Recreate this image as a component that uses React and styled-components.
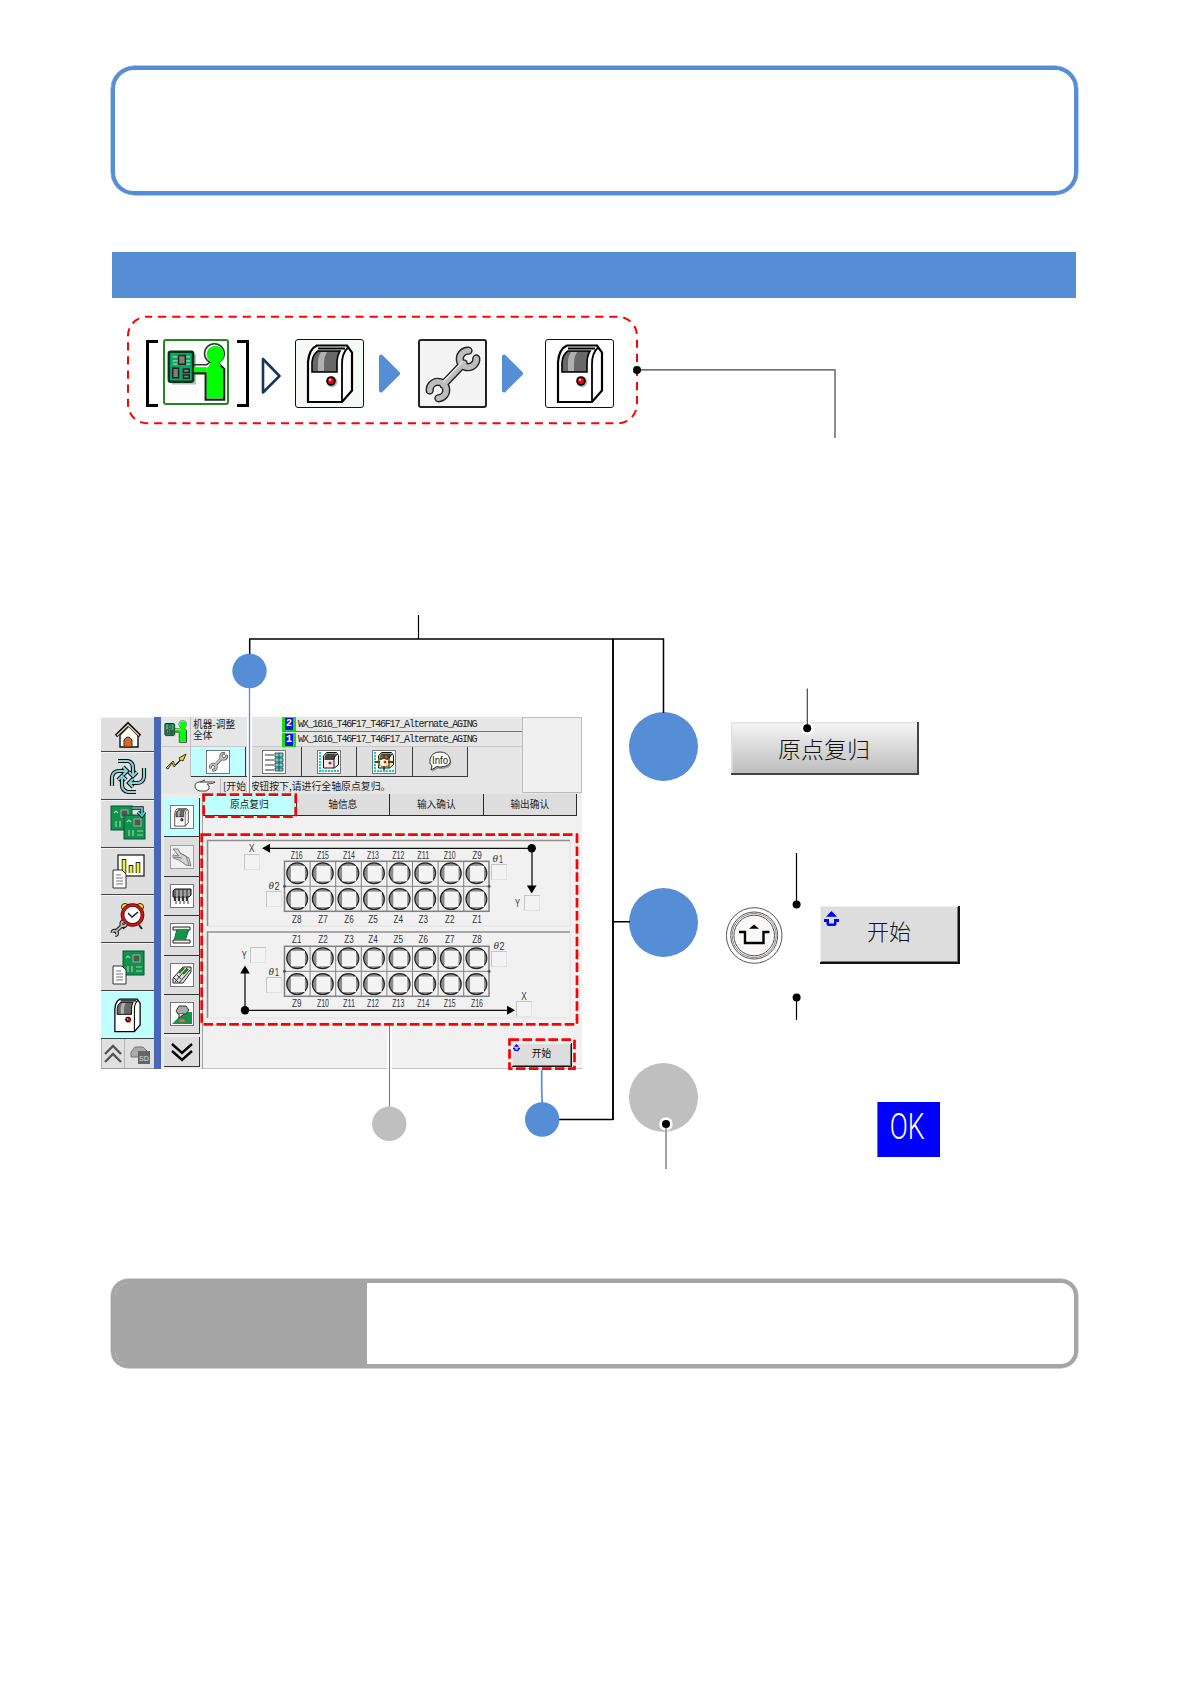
import React, { Fragment } from "react";
import styled, { createGlobalStyle } from "styled-components";

const BLUE = "#558ed5";
const CJK = '"Noto Sans CJK SC", sans-serif';

const GlobalStyle = createGlobalStyle`
    * {
        box-sizing: border-box;
    }
    body {
        margin: 0;
        background-color: white;
    }
    svg {
        display: block;
        flex: none;
    }
`;

const Page = styled.div`
    position: relative;
    width: 1190px;
    height: 1684px;
    padding-top: 66px;
    overflow: hidden;
    background-color: white;
`;

const IntroBox = styled.div`
    width: 967px;
    height: 129px;
    margin-left: 111px;
    border: 4px solid ${BLUE};
    box-shadow: 0 0 0 0.4px ${BLUE};
    border-radius: 23px;
`;

const Band = styled.div`
    width: 964px;
    height: 46px;
    margin: 57px 0 0 112px;
    background-color: ${BLUE};
`;

const Path = styled.div`
    position: relative;
    width: 512px;
    height: 110px;
    margin: 17px 0 0 126px;
    padding: 24px 0 0 20px;
    display: flex;
    align-items: flex-start;
`;

const PathFrame = styled.svg`
    position: absolute;
    left: 0;
    top: 0;
`;

const Bracket = styled.div`
    width: 12px;
    height: 67px;
    margin: 1px 0 0 ${p => p.$gap || 0}px;
    border: 3px solid black;
    border-${p => (p.$side === "left" ? "right" : "left")}: none;
`;

const PathIcon = styled.div`
    flex: none;
    width: ${p => p.$size || 69}px;
    height: ${p => p.$size || 69}px;
    margin-left: ${p => p.$gap}px;
    border: ${p => p.$border || "1.5px solid #111"};
    border-radius: 3px;
    background-color: ${p => p.$fill || "#f6faf6"};
    display: flex;
    align-items: center;
    justify-content: center;
`;

const PathArrow = styled.svg`
    margin: ${p => p.$top}px 0 0 ${p => p.$gap}px;
`;

const Figure = styled.div`
    display: flex;
    align-items: flex-start;
    margin: 286px 0 0 101px;
`;

const Screen = styled.div`
    display: flex;
    width: 481px;
    height: 352px;
    margin-top: 6px;
    background-color: #f1f1f1;
    font-family: ${CJK};
    font-size: 9.7px;
    line-height: 11px;
    color: #222;
`;

const MainMenu = styled.div`
    width: 53px;
    display: flex;
    flex-direction: column;
    background-color: #e0e0e0;
`;

const MenuCell = styled.div`
    height: ${p => p.$height}px;
    display: flex;
    align-items: center;
    justify-content: center;
    background-color: ${p => (p.$active ? "#bfffff" : "#dfdfdf")};
    border-bottom: 1px solid #444;
    border-top: 1px solid #f4f4f4;
`;

const MenuFoot = styled.div`
    display: flex;
    flex: 1;
    border-bottom: 1px solid #999;
    > div {
        display: flex;
        align-items: center;
        justify-content: center;
        border-left: 1px solid #b4b4b4;
    }
    > div:first-child {
        width: 23px;
    }
    > div:last-child {
        width: 30px;
    }
`;

const Divider = styled.div`
    width: 7px;
    background-color: #4767bd;
`;

const Workspace = styled.div`
    width: 421px;
    display: flex;
    flex-direction: column;
`;

const Top = styled.div`
    display: flex;
    height: 77px;
    background-color: #e6e6e6;
`;

const TopRows = styled.div`
    width: 361px;
    display: flex;
    flex-direction: column;
`;

const Preview = styled.div`
    width: 60px;
    height: 76px;
    background-color: #f0f0f0;
    border: 1px solid #bcbcbc;
`;

const TitleRow = styled.div`
    display: flex;
    height: 30px;
    border-bottom: 1px solid #c8c8c8;
`;

const CornerIcon = styled.div`
    width: 30px;
    display: flex;
    align-items: center;
    justify-content: center;
    border-right: 1px solid #c0c0c0;
`;

const ScreenTitle = styled.div`
    width: 91px;
    padding: 2px 0 0 2px;
    white-space: nowrap;
`;

const Programs = styled.div`
    flex: 1;
`;

const Program = styled.div`
    display: flex;
    align-items: center;
    height: 15px;
    border-bottom: 1px solid #777;
    font-family: "Liberation Mono", monospace;
    font-size: 10px;
    letter-spacing: -1.18px;
    white-space: nowrap;
    &:last-child {
        border-bottom: none;
    }
`;

const LaneNumber = styled.div`
    width: 14px;
    height: 14px;
    margin-right: 2px;
    border: solid #12e012;
    border-width: 1px 3px 1px 3px;
    background-color: #1010e8;
    color: white;
    font-weight: bold;
    letter-spacing: 0;
    line-height: 12px;
    text-align: center;
`;

const ToolRow = styled.div`
    display: flex;
    height: 30px;
`;

const Tool = styled.div`
    width: 55.4px;
    display: flex;
    align-items: center;
    justify-content: center;
    background-color: ${p => (p.$active ? "#bfffff" : "#dfdfdf")};
    border: solid #3a3a3a;
    border-width: 0 1px 1.5px 0;
`;

const MessageRow = styled.div`
    display: flex;
    height: 17px;
    align-items: center;
    padding-left: 33px;
    white-space: nowrap;
    > span {
        margin-left: 4px;
        padding-left: 2px;
        border-left: 1px solid #bbb;
        font-size: 9.9px;
        line-height: 16px;
    }
`;

const Body = styled.div`
    display: flex;
    flex: 1;
`;

const SideMenu = styled.div`
    width: 42px;
    padding: 4px 3px 0;
    border-right: 1px solid #a0a0a0;
    background-color: #ececec;
`;

const SideCell = styled.div`
    width: 36px;
    height: ${p => p.$height || 39.4}px;
    margin-top: ${p => p.$gap || 0}px;
    display: flex;
    align-items: center;
    justify-content: center;
    background-color: ${p => (p.$active ? "#bfffff" : "#dedede")};
    border: solid #333;
    border-width: 0 1.5px 1.5px 0;
`;

const IconFrame = styled.div`
    width: 24px;
    height: 24px;
    border: 1px solid #777;
    background-color: #fff;
    opacity: ${p => (p.$dim ? 0.6 : 1)};
    display: flex;
    align-items: center;
    justify-content: center;
`;

const Content = styled.div`
    width: 379px;
    display: flex;
    flex-direction: column;
    border-bottom: 1px solid #c4c4c4;
`;

const Tabs = styled.div`
    display: flex;
    height: 22px;
    width: 374px;
`;

const Tab = styled.div`
    flex: 1;
    display: flex;
    align-items: center;
    justify-content: center;
    background-color: ${p => (p.$active ? "#bfffff" : "#dddddd")};
    border: solid #2a2a2a;
    border-width: 0 1.5px 1.5px 0;
`;

const Panels = styled.svg`
    margin-top: 19px;
`;

const PanelFoot = styled.div`
    display: flex;
    justify-content: flex-end;
    margin-top: 15px;
    padding-right: 10px;
`;

const StartButton = styled.div`
    position: relative;
    display: flex;
    align-items: center;
    justify-content: center;
    width: ${p => (p.$large ? 140 : 60)}px;
    height: ${p => (p.$large ? 58 : 24)}px;
    margin-left: ${p => p.$gap || 0}px;
    padding-bottom: ${p => (p.$large ? 8 : 3)}px;
    background-color: #dddddd;
    border: solid #111;
    border-width: 0 ${p => (p.$large ? 2 : 1)}px ${p => (p.$large ? 2 : 1)}px 0;
    box-shadow: inset 1px 1px 0 #efefef, inset -1px -1px 0 #777;
    font-family: ${CJK};
    font-size: ${p => (p.$large ? 22 : 9.7)}px;
    font-weight: ${p => (p.$large ? 300 : 400)};
    color: #111;
`;

const StartMark = styled.svg`
    position: absolute;
    left: ${p => p.$left}px;
    top: ${p => p.$top}px;
`;

const Steps = styled.div`
    margin: 1px 0 0 47px;
`;

const Step = styled.div`
    display: flex;
    height: 175.5px;
`;

const StepCircle = styled.div`
    width: 69px;
    height: 69px;
    border-radius: 50%;
    background-color: ${p => (p.$muted ? "#bfbfbf" : BLUE)};
`;

const OriginButton = styled.div`
    width: 188px;
    height: 53px;
    margin: 10px 0 0 33px;
    display: flex;
    align-items: center;
    justify-content: center;
    background: linear-gradient(#f6f6f6, #bdbdbd);
    border: solid #444;
    border-width: 0 2px 2px 0;
    box-shadow: inset 1.5px 1.5px 0 #e2e2e2;
    font-family: ${CJK};
    font-size: 23px;
    font-weight: 300;
    color: #111;
`;

const KeyRow = styled.div`
    display: flex;
    align-items: flex-start;
    margin: 18px 0 0 28px;
`;

const OkBadge = styled.div`
    width: 63px;
    height: 55px;
    margin: 39px 0 0 178.5px;
    display: flex;
    align-items: center;
    justify-content: center;
    background-color: #0000ff;
    border-left: 1px solid #777;
`;

const OkText = styled.span`
    font-family: Roboto, sans-serif;
    font-size: 37px;
    font-weight: 300;
    line-height: 37px;
    color: white;
    transform: translate(-1px, -3px) scaleX(0.72);
`;

const NoteBox = styled.div`
    width: 967px;
    height: 89px;
    margin: 40px 0 0 111px;
    display: flex;
    overflow: hidden;
    border: 4px solid #a5a5a5;
    border-radius: 17px;
    box-shadow: 0 0 0 0.4px #a5a5a5;
`;

const NoteLabel = styled.div`
    width: 252px;
    background-color: #a5a5a5;
`;

const Callouts = styled.svg`
    position: absolute;
    left: 0;
    top: 0;
    pointer-events: none;
`;

function OperatorIcon({ size }) {
    return (
        <svg width={size} height={size} viewBox="0 0 66 66">
            <path d="M8 45h24V15" fill="none" stroke="#bbb" strokeWidth="2" />
            <rect x="5" y="12" width="25" height="31" rx="2" fill="#0ba862" stroke="#03341c" strokeWidth="2.6" />
            <path d="M9 17.500h18M9 21.500h18M9 25h18" stroke="#9fd8b8" strokeWidth="1.3" />
            <path d="M15 16h7v9h-7zM9 29h6v10h-6zM20 30h6v3.500h-6zM20 36h6v3.500h-6z" fill="#808080" stroke="#222" strokeWidth="1.6" />
            <path d="M31 28h13v6H31z" fill="#0f0" />
            <path d="M31 25.500h13l6-5" fill="none" stroke="#333" strokeWidth="1.6" />
            <path d="M31 34.500h12v27h19V30l-7-7" fill="none" stroke="#222" strokeWidth="2.4" />
            <path d="M44 60V29l8-7 9 8v30z" fill="#0f0" />
            <circle cx="52" cy="14" r="10.200" fill="#fff" stroke="#333" strokeWidth="1.6" />
            <circle cx="53" cy="15" r="9" fill="#0f0" />
            <path d="M48 23h8l3 4H46z" fill="#0f0" />
        </svg>
    );
}

function MachineIcon({ size }) {
    return (
        <svg width={size} height={size} viewBox="0 0 68 68">
            <path d="M12 62V22Q13 9 21 5.500h30l5 7v38L46 62z" fill="#fff" stroke="#000" strokeWidth="2.2" />
            <path d="M46 62V24Q46 13 52 7.500M22 8.500h27" fill="none" stroke="#000" strokeWidth="1.8" />
            <path d="M16 32V22Q17 14 22 11h22q-3 5-3 12v9z" fill="#686868" stroke="#000" strokeWidth="1.6" />
            <path d="M22 31V20q1-5 3-8h6q-3 5-3 10v9z" fill="#b0b0b0" />
            <circle cx="36" cy="42" r="5.400" fill="#bbb" />
            <circle cx="35" cy="41" r="3.900" fill="#f00" stroke="#000" strokeWidth="1.8" />
            <circle cx="34" cy="39.800" r="1.200" fill="#fbb" />
        </svg>
    );
}

function WrenchIcon({ size }) {
    const jaws = "M50 10A8.5 8.5 0 1 0 58 18M19 59A8.5 8.5 0 1 0 10 51M24 45L45 23";
    return (
        <svg width={size} height={size} viewBox="0 0 68 68" fill="none">
            <path d={jaws} stroke="#222" strokeWidth="8.5" strokeLinecap="round" />
            <path d={jaws} stroke="#bdbdbd" strokeWidth="5.6" strokeLinecap="round" />
            <path d="M24 42L44 21" stroke="#eee" strokeWidth="1.4" />
        </svg>
    );
}

function HomeIcon() {
    return (
        <svg width="30" height="28" viewBox="0 0 30 28">
            <path d="M7 14v12h18V14l-9-9z" fill="#fff" stroke="#111" strokeWidth="1.4" />
            <path d="M3 15L15 3l12 12" fill="none" stroke="#111" strokeWidth="3.4" />
            <path d="M4 14.500L15 4l11 10.500" fill="none" stroke="#f6c9a0" strokeWidth="1.4" />
            <path d="M11 26v-7q4-6 8 0v7z" fill="#d06a28" stroke="#421" />
        </svg>
    );
}

function CycleIcon() {
    const d = "M9 4h10q5 1 5 7v6M20 15l4 4 4-4M35 11v9q-1 6-7 6h-8M24 22l-4 4 4 4M27 35H19q-6-1-6-7v-7M17 23l-4-4-4 4M3 29v-9q1-6 7-6h8M14 10l4 4-4 4";
    return (
        <svg width="38" height="38" viewBox="0 0 38 38" fill="none">
            <path d={d} stroke="#111" strokeWidth="4.200" />
            <path d={d} stroke="#84d4d8" strokeWidth="2" />
        </svg>
    );
}

function Board({ x, y }) {
    return (
        <g transform={`translate(${x} ${y})`}>
            <rect width="21" height="24" fill="#10924a" stroke="#053" />
            <rect x="10" y="4" width="7" height="7" fill="#555" stroke="#ccc" strokeWidth=".7" />
            <path d="M3 7l2-2 2 2M5 15v6M9 15v6M13 16h6M13 20h6" stroke="#a5cfae" strokeWidth="1.2" fill="none" />
        </g>
    );
}

function Sheet({ x, y }) {
    return (
        <g transform={`translate(${x} ${y})`}>
            <path d="M0 0h9l4 4v14H0z" fill="#fff" stroke="#333" />
            <path d="M3 5h5M3 8h7M3 11h7M3 14h7" stroke="#777" />
        </g>
    );
}

function BoardsIcon() {
    return (
        <svg width="37" height="40" viewBox="0 0 37 40">
            <Board x={2} y={2} />
            <Board x={15} y={11} />
            <path d="M23 4h10v6M29 8l4 4 3-4" fill="none" stroke="#111" strokeWidth="3.400" />
            <path d="M23 4h10v6M29 8l4 4 3-4" fill="none" stroke="#5fd8e0" strokeWidth="1.600" />
        </svg>
    );
}

function ReportIcon() {
    return (
        <svg width="36" height="36" viewBox="0 0 36 36">
            <rect x="8" y="2" width="26" height="21" fill="#fff" stroke="#333" strokeWidth="1.400" />
            <path d="M14 6v14M21 12v8M28 9v11" stroke="#222" strokeWidth="4.600" />
            <path d="M14 7v13M21 13v7M28 10v10" stroke="#ee2" strokeWidth="2.800" />
            <Sheet x={3} y={17} />
        </svg>
    );
}

function ClockIcon() {
    const wrench = "M50 9A8.5 8.5 0 1 0 59 18M19 60A8.5 8.5 0 1 0 9 51M23 45L46 23";
    return (
        <svg width="36" height="36" viewBox="0 0 36 36">
            <circle cx="15" cy="6" r="3.500" fill="#fe2" stroke="#222" />
            <circle cx="30" cy="6" r="3.500" fill="#fe2" stroke="#222" />
            <path d="M16 24l-3 4M29 24l3 4" stroke="#222" strokeWidth="2" />
            <circle cx="22.500" cy="14" r="10" fill="#fff" stroke="#300" strokeWidth="3.600" />
            <circle cx="22.500" cy="14" r="10" fill="none" stroke="#d11" strokeWidth="2.200" />
            <path d="M18 12l4 4 6-5" fill="none" stroke="#111" strokeWidth="1.300" />
            <g transform="translate(0 18) scale(.27)">
                <path d={wrench} fill="none" stroke="#111" strokeWidth="14" />
                <path d={wrench} fill="none" stroke="#bbb" strokeWidth="7" />
            </g>
        </svg>
    );
}

function BoardSheetIcon() {
    return (
        <svg width="36" height="36" viewBox="0 0 36 36">
            <Board x={13} y={2} />
            <Sheet x={3} y={17} />
        </svg>
    );
}

function ChevronsIcon({ up }) {
    const d = up ? "M2 11l8-8 8 8M2 19l8-8 8 8" : "M2 2l10 9 10-9M2 9l10 9 10-9";
    return (
        <svg width={up ? 20 : 24} height={up ? 21 : 20}>
            <path d={d} fill="none" stroke={up ? "#555" : "#000"} strokeWidth="2.400" />
        </svg>
    );
}

function SdIcon() {
    return (
        <svg width="22" height="22" viewBox="0 0 22 22">
            <path d="M2 9l4-5h8l4 4v6H2z" fill="#aaa" stroke="#777" />
            <path d="M9 8h12v13H9z" fill="#666" />
            <text x="10" y="18" fontSize="8" textLength="10" lengthAdjust="spacingAndGlyphs" fontFamily="Liberation Sans, sans-serif" fill="#ddd">SD</text>
        </svg>
    );
}

function BoltIcon() {
    return (
        <svg width="22" height="18" viewBox="0 0 22 18">
            <path d="M1 15l7-7 2 4 5-5-1-2 7-4-3 7-2-1-7 7-2-4-4 6z" fill="#e8e010" stroke="#333" />
        </svg>
    );
}

function HandIcon() {
    return (
        <svg width="22" height="13" viewBox="0 0 22 13">
            <path d="M21 3H6Q1 3 1 7t5 5h6l3-2M21 3q-1 2-8 2M13 5q3 1 2 5M6 3l5-2" fill="#fff" stroke="#444" />
        </svg>
    );
}

function ListIcon() {
    return (
        <svg width="20" height="20" viewBox="0 0 20 20">
            <path d="M1 3h9M1 8h9M1 13h9M1 18h9" stroke="#999" strokeWidth="2" />
            <path d="M11 1h8v4h-8zM11 6h8v4h-8zM11 11h8v4h-8zM11 16h8v3h-8z" fill="#5dd" stroke="#333" strokeWidth=".8" />
            <path d="M15 1v18" stroke="#333" strokeWidth=".8" />
        </svg>
    );
}

function AxisMachineIcon({ target }) {
    return (
        <svg width="22" height="22" viewBox="0 0 22 22">
            <path d="M2 1v19h19" fill="none" stroke="#1cc" strokeWidth="2" strokeDasharray="2 1" />
            <path d="M5.500 17V5l3-3.500h10l2 3v9l-4 3.500z" fill="#eee" stroke="#111" />
            <path d="M6.500 9V6l2-3.500h9.500l-2 6.500z" fill="#444" />
            <path d="M16 17V7l3-4" fill="none" stroke="#111" />
            <circle cx="12" cy="12" r="1.600" fill="#e11" />
            {target && (
                <Fragment>
                    <circle cx="11" cy="11" r="5.500" fill="none" stroke="#8d7d10" strokeWidth="2" strokeDasharray="3 1.300" />
                    <path d="M11 3v4M11 15v4M2 11h5M15 11h5" stroke="#554a00" strokeWidth="2" />
                    <circle cx="11" cy="11" r="3" fill="#fff" />
                    <circle cx="12" cy="11" r="1.500" fill="#e11" />
                </Fragment>
            )}
        </svg>
    );
}

function InfoIcon() {
    return (
        <svg width="24" height="21" viewBox="0 0 24 21">
            <path d="M4 15Q1 13 2 8 4 2 12 2t10 7-9 8q-2 0-4-.5L3 20z" fill="#999" transform="translate(1 1)" />
            <path d="M4 15Q1 13 2 8 4 1 12 1t10 7-9 8q-2 0-4-.5L3 19z" fill="#fff" stroke="#333" />
            <text x="4" y="12.500" fontSize="10" textLength="16" lengthAdjust="spacingAndGlyphs" fontFamily="Liberation Sans, sans-serif" fill="#222">Info</text>
        </svg>
    );
}

function HeadIcon({ type }) {
    return (
        <svg width="22" height="22" viewBox="0 0 22 22">
            {type === "camera" && (
                <path d="M2 3h5l2 4 9 5 2 8-5-1-7-5-6-2v-3l6 1zM9 7l6 3 3 9M3 11l8 1" fill="#ccc" stroke="#444" />
            )}
            {type === "nozzles" && (
                <Fragment>
                    <path d="M2 6l2-2h16v6l-2 2H2z" fill="#666" stroke="#111" />
                    <path d="M6 5v7M10 5v7M14 5v7M18 5v6" stroke="#ddd" />
                    <path d="M4 12v4M8 12v4M12 12v4M16 12v4" stroke="#333" strokeWidth="2.400" />
                    <path d="M5 16v3M9 16v3M13 16v3M17 16v3" stroke="#333" />
                </Fragment>
            )}
            {type === "belt" && (
                <Fragment>
                    <path d="M6 5h12l-4 12H3z" fill="#18944a" stroke="#064" />
                    <path d="M2 3h17v3H2zM2 16h17v3H2z" fill="#eee" stroke="#222" />
                    <path d="M6 5h11l-3 11H4z" fill="#18944a" />
                </Fragment>
            )}
            {type === "feeder" && (
                <Fragment>
                    <path d="M2 19v-5L12 3h8v5l-8 11z" fill="#ddd" stroke="#222" />
                    <path d="M4 18l12-14M8 19L19 6M3 14l4 4M6 11l4 4" stroke="#333" />
                    <path d="M8 9l5-5M12 10l5-5" stroke="#1a7a1a" strokeWidth="2" />
                </Fragment>
            )}
            {type === "inspect" && (
                <Fragment>
                    <path d="M1 21L13 9h8v12z" fill="#18944a" />
                    <path d="M5 8l3-5h7l3 4-3 4H7z" fill="#aaa" stroke="#333" />
                    <path d="M8 11v4l5-4" fill="#ddd" stroke="#333" />
                    <ellipse cx="11" cy="17.500" rx="3" ry="1.600" fill="#f55" />
                </Fragment>
            )}
        </svg>
    );
}

function StartSymbol() {
    return <path d="M7.500 0l5.500 5.800H2zM0 8h5v4.500h5V8h5v3h-2.500v2.500L11 15H4l-1.500-1.500V11H0z" fill="#0000ff" />;
}

const columns = [296.7, 323, 349, 373, 398.3, 423.3, 449.7, 477];

function Label({ x, y, width, children }) {
    return (
        <text x={x - width / 2} y={y + 4} fontSize="11" fontFamily="Liberation Sans, sans-serif" fill="#333" textLength={width} lengthAdjust="spacingAndGlyphs">
            {children}
        </text>
    );
}

function Theta({ x, y, n }) {
    return (
        <g>
            <text x={x - 5.5} y={y + 3.6} fontSize="11" fontStyle="italic" fontFamily="Liberation Serif, serif" fill="#333">θ</text>
            <Label x={x + 3} y={y} width={n === 1 ? 4 : 5}>{n}</Label>
        </g>
    );
}

function ValueBox({ x, y }) {
    return (
        <g fill="none">
            <rect x={x} y={y} width="15" height="15" fill="#f3f3f3" stroke="#e2e2e2" />
            <path d={`M${x} ${y + 15}V${y}h15`} stroke="#c4c4c4" />
        </g>
    );
}

function HeadGrid({ top, upper, lower, label }) {
    return (
        <g>
            <rect x="284.500" y={top} width="204.500" height="50" fill="none" stroke="#808080" strokeWidth="1.500" />
            <path d={`M284 ${top + 25}h205`} stroke="#808080" />
            {columns.map((cx, i) => (
                <Fragment key={i}>
                    {i > 0 && <path d={`M${284.5 + i * 25.6} ${top}v50`} stroke="#808080" />}
                    {[12, 37.8].map(dy => (
                        <g key={dy}>
                            <circle cx={297.2 + i * 25.6} cy={top + dy} r="10.400" fill="#8e8e8e" stroke="#222" strokeWidth="1.200" />
                            <rect x={290.9 + i * 25.6} y={top + dy - 7.5} width="14" height="15.500" fill="#f4f4f4" />
                        </g>
                    ))}
                    <Label x={cx} y={top + label[0]} width={upper[i] > 9 ? 12 : 9.5}>{`Z${upper[i]}`}</Label>
                    <Label x={cx} y={top + label[1]} width={lower[i] > 9 ? 12 : 9.5}>{`Z${lower[i]}`}</Label>
                </Fragment>
            ))}
            <circle cx="284.500" cy={top + 25} r="1.500" fill="#555" />
            <circle cx="489" cy={top + 25} r="1.500" fill="#555" />
        </g>
    );
}

function AxisPanels() {
    const down = [8, 7, 6, 5, 4, 3, 2, 1];
    const high = [16, 15, 14, 13, 12, 11, 10, 9];
    return (
        <Panels width="379" height="193" viewBox="203 835 379 193">
            <g fill="none">
                <path d="M207.500 926V840.500H570" stroke="#909090" strokeWidth="1.600" />
                <path d="M207.500 1018V932H570" stroke="#909090" strokeWidth="1.600" />
                <path d="M208 926h362v-85M208 1018h362v-85" stroke="#e2e2e2" />
            </g>
            <HeadGrid top={861.3} upper={high} lower={down} label={[-6.5, 57.5]} />
            <HeadGrid top={946.3} upper={[...down].reverse()} lower={[...high].reverse()} label={[-7, 57]} />

            <path d="M268 848.300h264v40M510 1010.300H245V970" fill="none" stroke="#111" strokeWidth="1.300" />
            <g fill="#000">
                <circle cx="531.700" cy="848.300" r="4.200" />
                <circle cx="245" cy="1010.300" r="4.200" />
                <path d="M262 848.300l8-4.500v9zM531.700 893.500l-4.800-8h9.600zM245 965.500l-4.800 8h9.600zM515 1010.300l-8-4.500v9z" />
            </g>

            <Label x={251.7} y={848} width={5.5}>X</Label>
            <ValueBox x={244.5} y={854.5} />
            <Theta x={274} y={885.5} n={2} />
            <ValueBox x={266.5} y={891.5} />
            <Theta x={498} y={858.5} n={1} />
            <ValueBox x={491.5} y={864.5} />
            <Label x={517.5} y={903} width={5}>Y</Label>
            <ValueBox x={524.5} y={895.5} />

            <Label x={244.3} y={955} width={5}>Y</Label>
            <ValueBox x={250.5} y={947.5} />
            <Theta x={274} y={971.5} n={1} />
            <ValueBox x={266.5} y={977.5} />
            <Theta x={499} y={945.5} n={2} />
            <ValueBox x={491.5} y={951.5} />
            <Label x={524} y={995.5} width={5.5}>X</Label>
            <ValueBox x={516.5} y={1001.5} />
        </Panels>
    );
}

function MachineScreen() {
    return (
        <Screen>
            <MainMenu>
                <MenuCell $height={35}><HomeIcon /></MenuCell>
                <MenuCell $height={48}><CycleIcon /></MenuCell>
                <MenuCell $height={47.5}><BoardsIcon /></MenuCell>
                <MenuCell $height={47.5}><ReportIcon /></MenuCell>
                <MenuCell $height={48}><ClockIcon /></MenuCell>
                <MenuCell $height={48}><BoardSheetIcon /></MenuCell>
                <MenuCell $height={48} $active><MachineIcon size={39} /></MenuCell>
                <MenuFoot>
                    <div><ChevronsIcon up /></div>
                    <div><SdIcon /></div>
                </MenuFoot>
            </MainMenu>
            <Divider />
            <Workspace>
                <Top>
                    <TopRows>
                        <TitleRow>
                            <CornerIcon><OperatorIcon size={25} /></CornerIcon>
                            <ScreenTitle>机器-调整<br />全体</ScreenTitle>
                            <Programs>
                                <Program><LaneNumber>2</LaneNumber>WX_1616_T46F17_T46F17_Alternate_AGING</Program>
                                <Program><LaneNumber>1</LaneNumber>WX_1616_T46F17_T46F17_Alternate_AGING</Program>
                            </Programs>
                        </TitleRow>
                        <ToolRow>
                            <CornerIcon><BoltIcon /></CornerIcon>
                            <Tool $active><IconFrame><WrenchIcon size={23} /></IconFrame></Tool>
                            <Tool><IconFrame><ListIcon /></IconFrame></Tool>
                            <Tool><IconFrame><AxisMachineIcon /></IconFrame></Tool>
                            <Tool><IconFrame><AxisMachineIcon target /></IconFrame></Tool>
                            <Tool><InfoIcon /></Tool>
                        </ToolRow>
                        <MessageRow>
                            <HandIcon />
                            <span>[开始]按钮按下,请进行全轴原点复归。</span>
                        </MessageRow>
                    </TopRows>
                    <Preview />
                </Top>
                <Body>
                    <SideMenu>
                        <SideCell $active><IconFrame><MachineIcon size={21} /></IconFrame></SideCell>
                        <SideCell><IconFrame $dim><HeadIcon type="camera" /></IconFrame></SideCell>
                        <SideCell><IconFrame><HeadIcon type="nozzles" /></IconFrame></SideCell>
                        <SideCell><IconFrame><HeadIcon type="belt" /></IconFrame></SideCell>
                        <SideCell><IconFrame><HeadIcon type="feeder" /></IconFrame></SideCell>
                        <SideCell><IconFrame><HeadIcon type="inspect" /></IconFrame></SideCell>
                        <SideCell $height={30} $gap={3}><ChevronsIcon /></SideCell>
                    </SideMenu>
                    <Content>
                        <Tabs>
                            <Tab $active>原点复归</Tab>
                            <Tab>轴信息</Tab>
                            <Tab>输入确认</Tab>
                            <Tab>输出确认</Tab>
                        </Tabs>
                        <AxisPanels />
                        <PanelFoot>
                            <StartButton>
                                <StartMark $left={1} $top={1} width="7" height="7" viewBox="0 0 15 15"><StartSymbol /></StartMark>
                                开始
                            </StartButton>
                        </PanelFoot>
                    </Content>
                </Body>
            </Workspace>
        </Screen>
    );
}

function BlueArrow({ gap }) {
    return (
        <PathArrow $gap={gap} $top={15} width="22" height="40">
            <path d="M2 2.500v34L19 19.500z" fill={BLUE} stroke={BLUE} strokeWidth="4" strokeLinejoin="round" />
        </PathArrow>
    );
}

function MenuPath() {
    return (
        <Path>
            <PathFrame width="512" height="110">
                <rect x="2" y="1.700" width="509" height="106.500" rx="19" fill="none" stroke="#ff0000" strokeWidth="2" strokeDasharray="8.200 5.900" strokeDashoffset="3" />
            </PathFrame>
            <Bracket $side="left" />
            <PathIcon $gap={5} $size={66} $border="2px solid #1f8a1f" $fill="#fdfdfd">
                <OperatorIcon size={64} />
            </PathIcon>
            <Bracket $side="right" $gap={8} />
            <PathArrow $gap={12} $top={17} width="21" height="39">
                <path d="M2 3v33.500L18.500 20z" fill="#fff" stroke="#17375e" strokeWidth="2.600" strokeLinejoin="round" />
            </PathArrow>
            <PathIcon $gap={13}><MachineIcon size={68} /></PathIcon>
            <BlueArrow gap={15} />
            <PathIcon $gap={17} $border="2px solid #222" $fill="#f4f4f4"><WrenchIcon size={66} /></PathIcon>
            <BlueArrow gap={15} />
            <PathIcon $gap={21} $fill="#fff"><MachineIcon size={68} /></PathIcon>
        </Path>
    );
}

function CalloutLines() {
    return (
        <Callouts width="1190" height="1684">
            {/* white gaps where leader lines cross the machine screen */}
            <path d="M249.500 717v76M389.500 1027v42" stroke="#fff" strokeWidth="5" />
            <g fill="none" stroke="#ff0000" strokeWidth="2.700">
                <rect x="203.700" y="794.700" width="92" height="22" strokeDasharray="9.500 3.500" />
                <rect x="201.700" y="834.700" width="375.300" height="189.600" strokeDasharray="9.600 3.300" />
                <rect x="509.500" y="1039.700" width="65" height="29" strokeDasharray="9.500 3.500" />
            </g>
            <g fill="none" stroke={BLUE} strokeWidth="1.300">
                <path d="M249.500 686v108" />
                <path d="M389.500 1025v84" stroke="#4682b8" strokeWidth="1" />
                <path d="M541.700 1070v20l.6 14" strokeWidth="1.700" />
            </g>
            <g fill="none" stroke="#000" strokeWidth="1.500">
                <path d="M249.700 655V639H663.500V713M559 1119.500h54M613 921.700h17" />
                <path d="M613 639v481" strokeWidth="1.900" />
                <path d="M418.500 615v24M796.500 853v52M796.500 997v23" strokeWidth="1.200" />
                <path d="M637 369.900h198v68M807.300 688.500V715" stroke="#444" strokeWidth="1.200" />
            </g>
            <circle cx="249.500" cy="671" r="17.200" fill={BLUE} />
            <circle cx="542.200" cy="1119.500" r="17.200" fill={BLUE} />
            <circle cx="389.300" cy="1123.800" r="17.200" fill="#bfbfbf" />
            <circle cx="807.200" cy="728.200" r="6.500" fill="#fff" />
            <circle cx="666" cy="1124" r="6.700" fill="#fff" />
            <path d="M666 1124v45" stroke="#a0a0a0" strokeWidth="2" />
            <path d="M807.300 715v12" stroke="#444" strokeWidth="1.200" />
            <g fill="#000">
                <circle cx="637" cy="369.900" r="4" />
                <circle cx="807.200" cy="728.200" r="4" />
                <circle cx="796.600" cy="904.400" r="4" />
                <circle cx="796.600" cy="997.600" r="4" />
                <circle cx="666" cy="1124" r="4" />
            </g>
        </Callouts>
    );
}

function App() {
    return (
        <Page>
            <GlobalStyle />
            <IntroBox />
            <Band />
            <MenuPath />
            <Figure>
                <MachineScreen />
                <Steps>
                    <Step>
                        <StepCircle />
                        <OriginButton>原点复归</OriginButton>
                    </Step>
                    <Step>
                        <StepCircle />
                        <KeyRow>
                            <svg width="57" height="58" viewBox="0 0 57 58">
                                <g fill="none" stroke="#555">
                                    <circle cx="28.200" cy="29.500" r="27.800" />
                                    <circle cx="28.200" cy="29.500" r="23.500" />
                                    <circle cx="28.200" cy="29.500" r="22" stroke="#888" />
                                    <circle cx="28.200" cy="29.500" r="20.300" fill="#fbf8f8" />
                                </g>
                                <path d="M13 26h6v11h18.500V26h6" fill="none" stroke="#000" strokeWidth="2.400" />
                                <path d="M28 18.500l5 4.200H23z" />
                            </svg>
                            <StartButton $large $gap={37}>
                                <StartMark $left={4} $top={5} width="15" height="15"><StartSymbol /></StartMark>
                                开始
                            </StartButton>
                        </KeyRow>
                    </Step>
                    <Step>
                        <StepCircle $muted />
                        <OkBadge><OkText>OK</OkText></OkBadge>
                    </Step>
                </Steps>
            </Figure>
            <NoteBox>
                <NoteLabel />
            </NoteBox>
            <CalloutLines />
        </Page>
    );
}

export default App;
